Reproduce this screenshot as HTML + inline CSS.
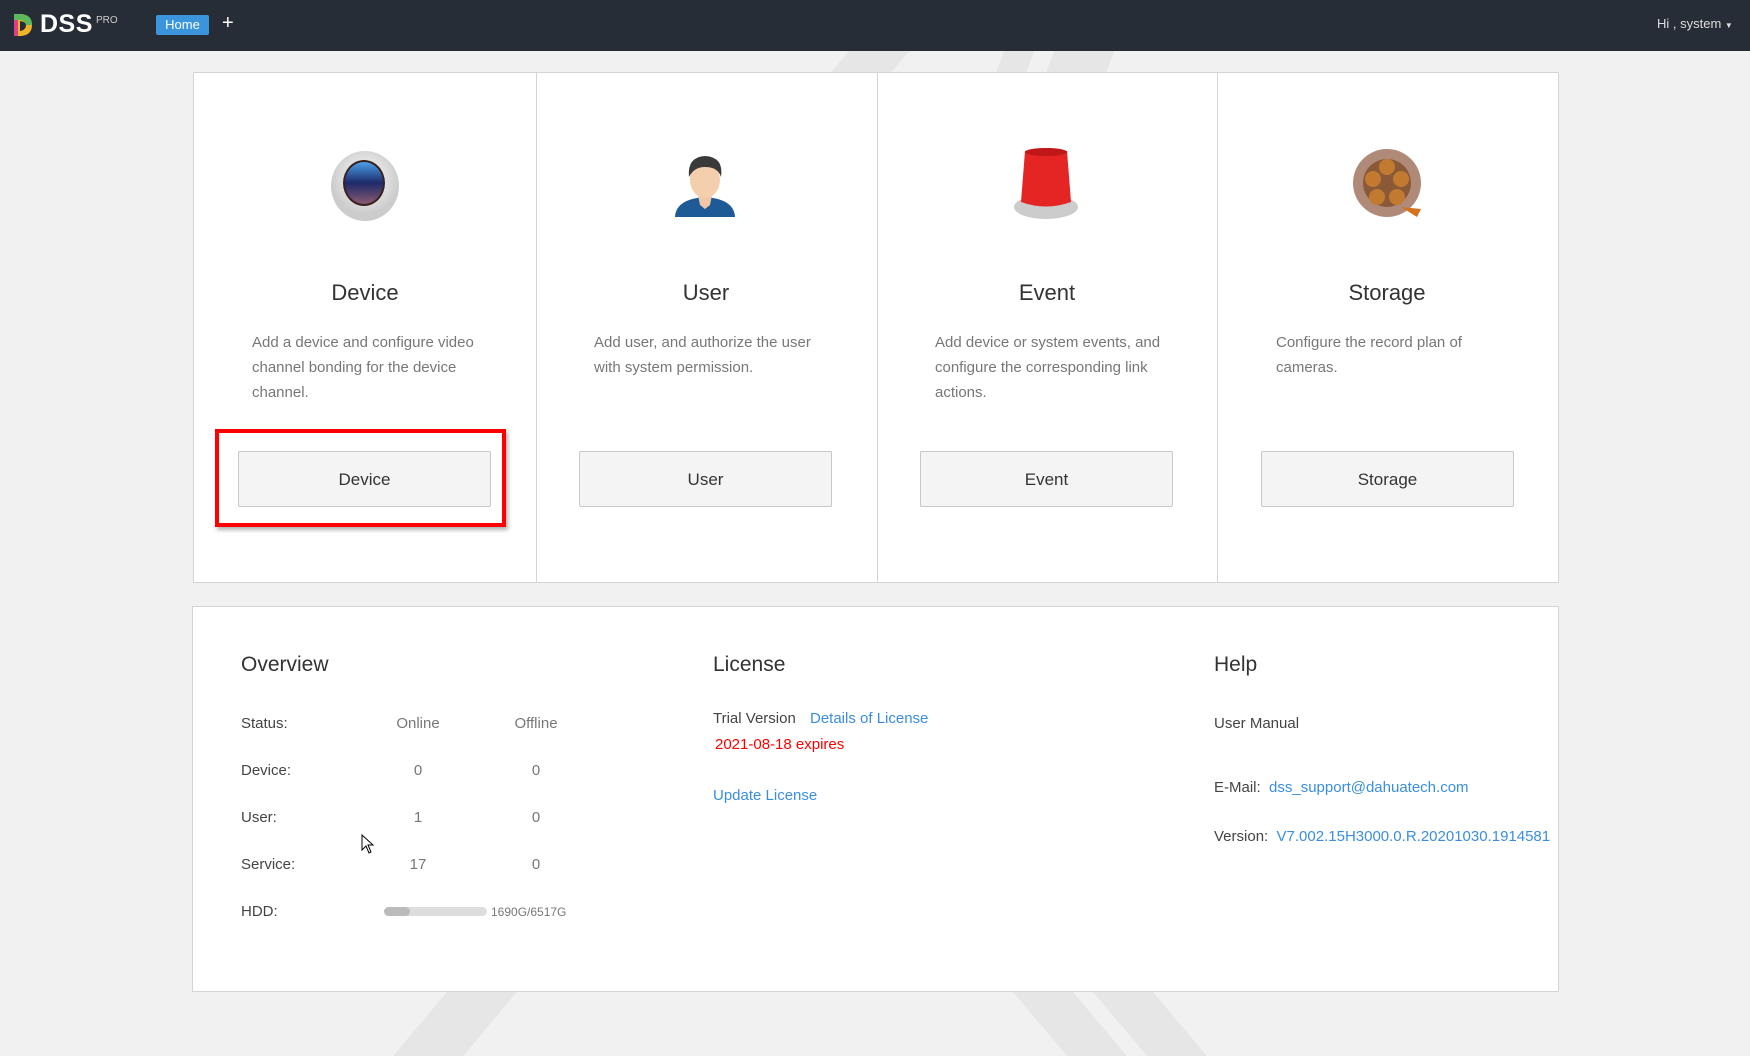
<!DOCTYPE html>
<html><head><meta charset="utf-8"><style>
*{margin:0;padding:0;box-sizing:border-box}
body{width:1750px;height:1056px;overflow:hidden;background:#f1f1f1;font-family:"Liberation Sans",Arial,sans-serif;position:relative}
.a{position:absolute;white-space:nowrap}
.hdr{position:absolute;left:0;top:0;width:1750px;height:51px;background:#272d36}
.stripe{position:absolute;background:#e6e6e6;transform:skewX(40deg)}
.panel{position:absolute;background:#fff;border:1px solid #d4d4d4}
.col{position:absolute;top:0;height:100%;border-left:1px solid #d4d4d4}
.t{font-size:22px;color:#333;text-align:center;width:340px}
.d{font-size:15px;color:#777;line-height:25px;white-space:normal;width:240px}
.btn{position:absolute;width:253px;height:56px;background:#f4f4f4;border:1px solid #c8c8c8;border-radius:2px;font-size:17px;color:#333;text-align:center;line-height:54px}
.lab{font-size:15px;color:#444}
.g{font-size:15px;color:#777}
.lnk{font-size:15px;color:#3a8ee0}
h3{position:absolute;font-weight:normal;font-size:21px;color:#333}
</style></head><body>
<div class="stripe" style="left:840px;top:51px;width:60px;height:22px;transform:skewX(-40deg)"></div>
<div class="stripe" style="left:1000px;top:51px;width:30px;height:22px;transform:skewX(-20deg)"></div>
<div class="stripe" style="left:1050px;top:51px;width:60px;height:22px;transform:skewX(-20deg)"></div>
<div class="stripe" style="left:420px;top:992px;width:70px;height:64px;transform:skewX(-40deg)"></div>
<div class="stripe" style="left:1040px;top:992px;width:60px;height:64px"></div>
<div class="stripe" style="left:1120px;top:992px;width:60px;height:64px"></div>
<div class="hdr">
 <svg class="a" style="left:12px;top:12px" width="22" height="26" viewBox="0 0 22 26"><path d="M2 2 L9 2 Q20 3 20 13 Q20 23 9 24 L2 24 Z" fill="#f0b429"/><path d="M2 2 L9 2 Q20 3 20 13 L13 13 Q13 8 8 8 L2 8Z" fill="#5cb85c"/><path d="M2 8 L6 8 L6 24 L2 24Z" fill="#e03c8a"/><path d="M8 9 Q14 10 14 13 Q14 18 8 19Z" fill="#272d36"/></svg>
 <div class="a" style="left:40px;top:10px;font-size:25px;font-weight:bold;color:#fff;letter-spacing:0.5px">DSS</div>
 <div class="a" style="left:96px;top:15px;font-size:10px;color:#ccc">PRO</div>
 <div class="a" style="left:156px;top:15px;width:53px;height:20px;background:#3a95dc;border-radius:2px;color:#fff;font-size:13px;text-align:center;line-height:20px">Home</div>
 <div class="a" style="left:222px;top:12px;color:#fff;font-size:20px">+</div>
 <div class="a" style="left:1657px;top:16px;color:#ddd;font-size:13px">Hi , system <span style="font-size:8px">▼</span></div>
</div>

<div class="panel" style="left:193px;top:72px;width:1366px;height:511px">
 <div class="col" style="left:342px"></div>
 <div class="col" style="left:683px"></div>
 <div class="col" style="left:1023px"></div>
</div>
<svg class="a" style="left:328px;top:148px" width="74" height="74" viewBox="0 0 74 74"><defs><radialGradient id="r1" cx="50%" cy="40%"><stop offset="0" stop-color="#fff"/><stop offset="1" stop-color="#ccc"/></radialGradient><linearGradient id="l1" x1="0" y1="0" x2="0" y2="1"><stop offset="0" stop-color="#4aa0e8"/><stop offset="0.5" stop-color="#1d2a6a"/><stop offset="1" stop-color="#8a5a70"/></linearGradient></defs><ellipse cx="37" cy="38" rx="34" ry="35" fill="url(#r1)"/><ellipse cx="36" cy="35" rx="21" ry="23" fill="#3b2020"/><ellipse cx="36" cy="35" rx="19" ry="21" fill="url(#l1)"/></svg>
<svg class="a" style="left:672px;top:147px" width="66" height="76" viewBox="0 0 66 76"><path d="M3 70 Q4 52 33 50 Q62 52 63 70 Z" fill="#1e5a96"/><path d="M26 48 L40 48 L38 58 L33 62 L28 58Z" fill="#f0c8a8"/><ellipse cx="33" cy="33" rx="15" ry="18" fill="#f3cfae"/><path d="M17 30 Q15 10 33 9 Q52 10 49 30 Q46 20 33 20 Q22 20 17 30Z" fill="#3a3a3a"/></svg>
<svg class="a" style="left:1013px;top:147px" width="66" height="76" viewBox="0 0 66 76"><ellipse cx="33" cy="60" rx="32" ry="12" fill="#ccc"/><path d="M8 55 L12 4 Q33 -2 54 4 L58 55 Q33 64 8 55Z" fill="#e52424"/><ellipse cx="33" cy="5" rx="21" ry="4" fill="#c01818"/></svg>
<svg class="a" style="left:1353px;top:147px" width="74" height="74" viewBox="0 0 74 74"><circle cx="34" cy="36" r="34" fill="#b08a78"/><circle cx="34" cy="36" r="24" fill="#8a5a38"/><circle cx="34" cy="20" r="8" fill="#c27a30"/><circle cx="20" cy="32" r="8" fill="#c27a30"/><circle cx="48" cy="32" r="8" fill="#c27a30"/><circle cx="24" cy="50" r="8" fill="#c27a30"/><circle cx="44" cy="50" r="8" fill="#c27a30"/><path d="M48 60 L68 62 L64 70Z" fill="#d4731c"/></svg>

<div class="a t" style="left:195px;top:280px">Device</div>
<div class="a t" style="left:536px;top:280px">User</div>
<div class="a t" style="left:877px;top:280px">Event</div>
<div class="a t" style="left:1217px;top:280px">Storage</div>

<div class="a d" style="left:252px;top:330px">Add a device and configure video channel bonding for the device channel.</div>
<div class="a d" style="left:594px;top:330px">Add user, and authorize the user with system permission.</div>
<div class="a d" style="left:935px;top:330px">Add device or system events, and configure the corresponding link actions.</div>
<div class="a d" style="left:1276px;top:330px">Configure the record plan of cameras.</div>

<div class="a" style="left:215px;top:429px;width:291px;height:98px;border:4px solid #f00;box-shadow:2px 3px 4px rgba(0,0,0,.3)"></div>
<div class="btn" style="left:238px;top:451px;line-height:56px">Device</div>
<div class="btn" style="left:579px;top:451px;line-height:56px">User</div>
<div class="btn" style="left:920px;top:451px;line-height:56px">Event</div>
<div class="btn" style="left:1261px;top:451px;line-height:56px">Storage</div>

<div class="panel" style="left:192px;top:606px;width:1367px;height:386px"></div>
<h3 style="left:241px;top:653px">Overview</h3>
<h3 style="left:713px;top:653px">License</h3>
<h3 style="left:1214px;top:653px">Help</h3>

<div class="a lab" style="left:241px;top:715px">Status:</div>
<div class="a g" style="left:378px;top:715px;width:80px;text-align:center">Online</div>
<div class="a g" style="left:496px;top:715px;width:80px;text-align:center">Offline</div>
<div class="a lab" style="left:241px;top:762px">Device:</div>
<div class="a g" style="left:378px;top:762px;width:80px;text-align:center">0</div>
<div class="a g" style="left:496px;top:762px;width:80px;text-align:center">0</div>
<div class="a lab" style="left:241px;top:809px">User:</div>
<div class="a g" style="left:378px;top:809px;width:80px;text-align:center">1</div>
<div class="a g" style="left:496px;top:809px;width:80px;text-align:center">0</div>
<div class="a lab" style="left:241px;top:856px">Service:</div>
<div class="a g" style="left:378px;top:856px;width:80px;text-align:center">17</div>
<div class="a g" style="left:496px;top:856px;width:80px;text-align:center">0</div>
<div class="a lab" style="left:241px;top:903px">HDD:</div>
<div class="a" style="left:384px;top:907px;width:103px;height:9px;background:#ddd;border-radius:5px"><div style="width:26px;height:9px;background:#bbb;border-radius:5px"></div></div>
<div class="a" style="left:491px;top:905px;font-size:12px;color:#777">1690G/6517G</div>
<svg class="a" style="left:361px;top:834px" width="14" height="20" viewBox="0 0 14 20"><path d="M1 1 L1 16 L5 12 L8 19 L10 18 L7 11 L12 11Z" fill="#fff" stroke="#000" stroke-width="1"/></svg>

<div class="a lab" style="left:713px;top:710px">Trial Version</div>
<div class="a lnk" style="left:810px;top:710px">Details of License</div>
<div class="a" style="left:715px;top:736px;font-size:15px;color:#f00">2021-08-18 expires</div>
<div class="a lnk" style="left:713px;top:787px">Update License</div>

<div class="a lab" style="left:1214px;top:715px">User Manual</div>
<div class="a lab" style="left:1214px;top:779px">E-Mail:&nbsp; <span class="lnk">dss_support@dahuatech.com</span></div>
<div class="a lab" style="left:1214px;top:828px">Version:&nbsp; <span class="lnk">V7.002.15H3000.0.R.20201030.1914581</span></div>
</body></html>
